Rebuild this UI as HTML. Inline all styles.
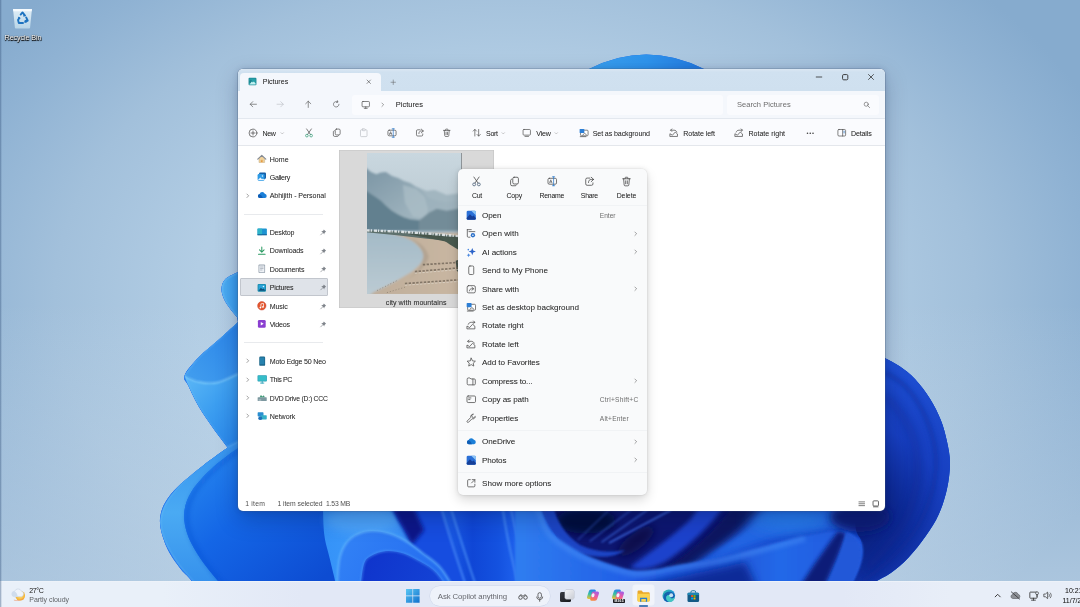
<!DOCTYPE html>
<html lang="en">
<head>
<meta charset="utf-8">
<title>Pictures - File Explorer</title>
<style>
*{box-sizing:border-box;margin:0;padding:0}
html,body{width:1080px;height:607px;overflow:hidden;background:#a9c6de}
body{position:relative;font-family:"Liberation Sans",sans-serif;font-size:7px;color:#1b1b1b;-webkit-font-smoothing:antialiased}
.abs{position:absolute}
#wall{position:absolute;left:0;top:0;width:1080px;height:607px}
.t{position:absolute;white-space:nowrap;line-height:10px;height:10px;margin-top:-4.4px;color:#303030;text-shadow:0 0 .3px rgba(0,0,0,.22)}
.g{color:#6d6d6d;text-shadow:none}
.ic{position:absolute;overflow:visible}
#win{position:absolute;left:238px;top:68.5px;width:646.5px;height:442px;border-radius:5px;background:#fff;overflow:hidden;box-shadow:0 0 0 .6px rgba(70,90,120,.45),0 8px 22px rgba(0,20,60,.26),0 0 6px rgba(0,20,60,.13)}
#tbar{position:absolute;left:0;top:0;width:100%;height:22px;background:linear-gradient(180deg,#dbe7f3 0,#d0e1f0 3px,#cfe0ef 100%)}
#tab{position:absolute;left:1.8px;top:4.600px;width:141.200px;height:17.900px;background:#f4f7fc;border-radius:4px 4px 0 0}
#nav{position:absolute;left:0;top:22px;width:100%;height:27.5px;background:#f4f7fc}
#addr{position:absolute;left:114px;top:26px;width:371px;height:20px;border-radius:3px;background:#fafbfe}
#tool{position:absolute;left:0;top:49.5px;width:100%;height:28px;background:#fafbfe;border-top:.6px solid #e3e8ef;border-bottom:.6px solid #e4e7ec}
#search{position:absolute;left:489px;top:26px;width:152px;height:20px;border-radius:3px;background:#fafbfe}
#side{position:absolute;left:0;top:78px;width:92px;height:350px}
.sel{position:absolute;background:#dfe3e9;border:.7px solid #c2c6cd;border-radius:1px}
.sep{position:absolute;left:6px;width:79px;height:.7px;background:#e8eaed}
#menu{position:absolute;left:458px;top:169px;width:188.5px;height:325.5px;border-radius:5px;background:#f9fafb;box-shadow:0 0 0 .5px rgba(0,0,0,.05),0 5px 12px rgba(0,0,0,.15),0 0 5px rgba(0,0,0,.09)}
.msep{position:absolute;left:0;width:100%;height:.7px;background:#f1f3f5}
#task{position:absolute;left:0;top:581px;width:1080px;height:26px;background:linear-gradient(90deg,#e9f0f9 0,#e9f0f9 15%,#e2e8f6 28%,#e2e8f6 78%,#e8eef8 88%,#e8eef8 100%);border-top:.7px solid #edf2f9}
#win .pg,#menu .pg,#task .pg,#recycle{filter:blur(.38px)}
</style>
</head>
<body>
<svg id="wall" viewBox="0 0 1080 607">
<defs>
<radialGradient id="bgx" gradientUnits="userSpaceOnUse" cx="515" cy="300" r="640" gradientTransform="translate(0,300) scale(1,.7) translate(0,-300)">
<stop offset="0" stop-color="#b9d2e7"/><stop offset=".5" stop-color="#b2cde4"/><stop offset=".72" stop-color="#a2c0db"/><stop offset=".9" stop-color="#8fb2d3"/><stop offset="1" stop-color="#86abce"/>
</radialGradient>
<linearGradient id="bgy" x1="0" x2="0" y1="0" y2="1">
<stop offset="0" stop-color="#dbe8f3" stop-opacity="0"/><stop offset=".5" stop-color="#dbe8f3" stop-opacity="0"/><stop offset="1" stop-color="#dde9f3" stop-opacity=".46"/>
</linearGradient>
<linearGradient id="shade" x1="0" x2="1" y1="0" y2="0"><stop offset="0" stop-color="#1a72ee"/><stop offset=".25" stop-color="#145ae2"/><stop offset=".6" stop-color="#1448d0"/><stop offset="1" stop-color="#123cba"/></linearGradient>
<linearGradient id="p1" x1="0" x2="1" y1="0" y2="0"><stop offset="0" stop-color="#50b0f4"/><stop offset="1" stop-color="#3498ec"/></linearGradient>
<linearGradient id="p2" gradientUnits="userSpaceOnUse" x1="185" y1="380" x2="245" y2="430"><stop offset="0" stop-color="#5ab6f6"/><stop offset=".5" stop-color="#3c9ef0"/><stop offset="1" stop-color="#2886ea"/></linearGradient>
<linearGradient id="p2in" gradientUnits="userSpaceOnUse" x1="190" y1="375" x2="240" y2="330"><stop offset="0" stop-color="#409cee"/><stop offset="1" stop-color="#2a84e8"/></linearGradient>
<linearGradient id="p3" gradientUnits="userSpaceOnUse" x1="0" y1="440" x2="0" y2="585"><stop offset="0" stop-color="#3592ee"/><stop offset=".5" stop-color="#4aaaf3"/><stop offset="1" stop-color="#3590ec"/></linearGradient>
<linearGradient id="p3in" gradientUnits="userSpaceOnUse" x1="190" y1="450" x2="310" y2="590"><stop offset="0" stop-color="#288af0"/><stop offset=".45" stop-color="#1466e6"/><stop offset="1" stop-color="#0d4cd2"/></linearGradient>
<linearGradient id="lp" gradientUnits="userSpaceOnUse" x1="322" y1="0" x2="450" y2="0"><stop offset="0" stop-color="#3492f8"/><stop offset=".45" stop-color="#419cfb"/><stop offset="1" stop-color="#2a78f0"/></linearGradient>
<linearGradient id="arch" gradientUnits="userSpaceOnUse" x1="345" y1="530" x2="450" y2="590"><stop offset="0" stop-color="#3282f6"/><stop offset="1" stop-color="#2268ee"/></linearGradient>
<linearGradient id="archin" gradientUnits="userSpaceOnUse" x1="365" y1="555" x2="445" y2="590"><stop offset="0" stop-color="#0f34cc"/><stop offset="1" stop-color="#1444d6"/></linearGradient>
<linearGradient id="sw" gradientUnits="userSpaceOnUse" x1="520" y1="0" x2="805" y2="0"><stop offset="0" stop-color="#3a86f4"/><stop offset=".4" stop-color="#2a66ea"/><stop offset="1" stop-color="#3a7cf0"/></linearGradient>
<linearGradient id="curl" gradientUnits="userSpaceOnUse" x1="740" y1="0" x2="865" y2="0"><stop offset="0" stop-color="#2268ea"/><stop offset=".6" stop-color="#1d56dc"/><stop offset="1" stop-color="#2a64dc"/></linearGradient>
<radialGradient id="rp" gradientUnits="userSpaceOnUse" cx="852" cy="520" r="175"><stop offset="0" stop-color="#081a72"/><stop offset=".28" stop-color="#0d2a96"/><stop offset=".55" stop-color="#173fc0"/><stop offset="1" stop-color="#1f52d6"/></radialGradient>
<linearGradient id="big" gradientUnits="userSpaceOnUse" x1="520" y1="0" x2="865" y2="0"><stop offset="0" stop-color="#2f7cf0"/><stop offset=".3" stop-color="#2260e6"/><stop offset=".55" stop-color="#1c4ed0"/><stop offset=".75" stop-color="#2468e8"/><stop offset="1" stop-color="#2058dc"/></linearGradient>
<linearGradient id="folds" gradientUnits="userSpaceOnUse" x1="440" y1="0" x2="570" y2="0"><stop offset="0" stop-color="#1e60e8"/><stop offset=".25" stop-color="#0f46d6"/><stop offset=".45" stop-color="#1452e0"/><stop offset=".6" stop-color="#1f62ee"/><stop offset="1" stop-color="#2468f0"/></linearGradient>
<linearGradient id="toparc" x1="0" x2="1" y1="0" y2="0"><stop offset="0" stop-color="#3aa0ee"/><stop offset=".5" stop-color="#2e94ec"/><stop offset="1" stop-color="#2278de"/></linearGradient>
<filter id="b2" x="-20%" y="-20%" width="140%" height="140%"><feGaussianBlur stdDeviation="2"/></filter>
<filter id="b4" x="-30%" y="-30%" width="160%" height="160%"><feGaussianBlur stdDeviation="4"/></filter>
<filter id="b8" x="-40%" y="-40%" width="180%" height="180%"><feGaussianBlur stdDeviation="8"/></filter>
<filter id="b1" x="-20%" y="-20%" width="140%" height="140%"><feGaussianBlur stdDeviation="1"/></filter>

<clipPath id="sil"><path d="M589,69 Q646,40 704,69 L885,200 L885,357.9 C887.5,359.3 895.0,363.0 900.0,366.5 C905.0,370.0 910.0,373.6 915.0,379.0 C920.0,384.4 925.7,391.9 930.0,398.7 C934.3,405.5 938.0,412.9 940.8,420.0 C943.6,427.1 945.5,434.4 947.0,441.6 C948.5,448.8 950.0,455.1 950.0,463.0 C950.0,470.9 948.9,480.4 947.0,489.0 C945.1,497.6 942.2,506.7 938.7,514.5 C935.2,522.3 930.8,528.8 925.8,536.0 C920.8,543.2 914.3,551.4 908.6,557.5 C902.9,563.6 896.5,568.8 891.5,572.5 C886.5,576.2 883.9,576.8 878.6,580.0 C873.4,583.2 863.1,590.0 860.0,592.0 L200,607 C198.7,602.8 195.2,588.3 192.0,582.0 C188.8,575.7 184.9,574.8 180.7,569.0 C176.5,563.2 170.0,555.3 166.6,547.0 C163.2,538.7 159.3,527.8 160.0,519.0 C160.7,510.2 163.9,502.8 171.0,494.0 C178.1,485.2 191.6,474.8 202.6,466.0 C213.6,457.2 231.3,445.2 237.0,441.0 L228,448 C225.5,444.7 217.8,434.8 213.0,428.0 C208.2,421.2 203.1,414.0 199.0,407.0 C194.9,400.0 190.9,391.3 188.5,386.0 C186.1,380.7 182.8,380.2 184.6,375.4 C186.3,370.6 193.1,363.1 199.0,357.0 C204.9,350.9 213.5,344.3 220.0,338.5 C226.5,332.7 235.0,324.8 238.0,322.0 L237.3,317.4 C236.2,316.1 232.9,312.6 230.7,309.5 C228.5,306.4 225.5,302.5 224.0,299.0 C222.5,295.5 221.3,291.8 221.5,288.5 C221.7,285.2 222.7,281.8 225.4,279.0 C228.2,276.2 235.9,273.2 238.0,272.0 L400,200 Z"/></clipPath>
</defs>
<rect width="1080" height="607" fill="url(#bgx)"/>
<rect width="1080" height="607" fill="url(#bgy)"/>
<g clip-path="url(#sil)">
<rect width="1080" height="607" fill="#1560e6"/>
<rect x="150" y="250" width="850" height="360" fill="url(#shade)"/>
<path d="M240,268 L238,272  C235.9,273.2 228.2,276.2 225.4,279.0 C222.7,281.8 221.7,285.2 221.5,288.5 C221.3,291.8 222.5,295.5 224.0,299.0 C225.5,302.5 228.5,306.4 230.7,309.5 C232.9,312.6 235.8,315.6 237.3,317.4 C238.9,319.1 239.6,319.6 240.0,320.0 L240,320 Z" fill="url(#p1)"/>
<path d="M240.0,320.0 C236.7,323.1 226.8,332.3 220.0,338.5 C213.2,344.7 204.9,350.9 199.0,357.0 C193.1,363.1 187.0,372.3 184.6,375.4  C185.2,377.2 186.1,380.7 188.5,386.0 C190.9,391.3 194.9,400.0 199.0,407.0 C203.1,414.0 208.2,421.2 213.0,428.0 C217.8,434.8 223.5,442.7 228.0,448.0 C232.5,453.3 238.0,458.0 240.0,460.0 L240,320Z" fill="url(#p2)"/>
<path d="M240.0,320.0 C236.7,323.1 226.8,332.3 220.0,338.5 C213.2,344.7 204.9,350.9 199.0,357.0 C193.1,363.1 187.0,372.3 184.6,375.4  C187.0,377.4 193.5,381.0 199.0,382.0 C204.5,383.0 210.7,384.0 217.5,382.5 C224.3,381.0 236.2,374.6 240.0,373.0 L240,320Z" fill="url(#p2in)"/>
<path d="M184.6,376.5 C187.0,377.4 193.5,381.0 199.0,382.0 C204.5,383.0 210.7,384.0 217.5,382.5 C224.3,381.0 236.2,374.6 240.0,373.0" fill="none" stroke="#8ad2fc" stroke-width="1.300" opacity=".9" filter="url(#b1)"/>
<path d="M238.0,272.0 C235.9,273.2 228.2,276.2 225.4,279.0 C222.7,281.8 221.7,285.2 221.5,288.5 C221.3,291.8 222.5,295.5 224.0,299.0 C225.5,302.5 228.5,306.4 230.7,309.5 C232.9,312.6 236.2,316.1 237.3,317.4" fill="none" stroke="#86cefb" stroke-width="1.100" opacity=".85" filter="url(#b1)"/>
<path d="M240.0,320.0 C236.7,323.1 226.8,332.3 220.0,338.5 C213.2,344.7 204.9,350.9 199.0,357.0 C193.1,363.1 187.0,372.3 184.6,375.4" fill="none" stroke="#7cc8fa" stroke-width="1" opacity=".7" filter="url(#b1)"/>
<path d="M184.6,375.4 C185.2,377.2 186.1,380.7 188.5,386.0 C190.9,391.3 194.9,400.0 199.0,407.0 C203.1,414.0 208.2,421.2 213.0,428.0 C217.8,434.8 225.5,444.7 228.0,448.0" fill="none" stroke="#7cc8fa" stroke-width="1" opacity=".6" filter="url(#b1)"/>
<path d="M240.0,440.5 C236.0,442.7 224.4,448.0 216.0,453.7 C207.6,459.4 197.5,467.4 189.6,474.9 C181.7,482.4 173.4,491.1 168.5,498.6 C163.6,506.1 161.0,512.7 160.3,519.7 C159.6,526.7 161.8,533.8 164.5,540.8 C167.2,547.8 172.2,555.7 176.4,561.9 C180.6,568.1 185.7,573.1 189.6,577.8 C193.5,582.5 198.3,588.0 200.0,590.0 L226,590  C223.8,587.5 217.8,581.0 213.0,575.0 C208.2,569.0 201.8,561.0 197.5,554.0 C193.2,547.0 189.2,540.0 187.0,533.0 C184.8,526.0 183.5,518.9 184.3,511.8 C185.1,504.8 187.2,498.2 192.0,490.7 C196.8,483.2 205.0,474.6 213.3,467.0 C221.6,459.4 237.2,448.7 242.0,445.0 Z" fill="url(#p3)"/>
<path d="M242.0,445.0 C237.2,448.7 221.6,459.4 213.3,467.0 C205.0,474.6 196.8,483.2 192.0,490.7 C187.2,498.2 185.1,504.8 184.3,511.8 C183.5,518.9 184.8,526.0 187.0,533.0 C189.2,540.0 193.2,547.0 197.5,554.0 C201.8,561.0 208.2,569.0 213.0,575.0 C217.8,581.0 223.8,587.5 226.0,590.0 L352,590 L352,505 L242,505 Z" fill="url(#p3in)"/>
<path d="M242.0,445.0 C237.2,448.7 221.6,459.4 213.3,467.0 C205.0,474.6 196.8,483.2 192.0,490.7 C187.2,498.2 185.1,504.8 184.3,511.8 C183.5,518.9 184.8,526.0 187.0,533.0 C189.2,540.0 193.2,547.0 197.5,554.0 C201.8,561.0 208.2,569.0 213.0,575.0 C217.8,581.0 223.8,587.5 226.0,590.0" fill="none" stroke="#0b4fd0" stroke-width="3" opacity=".55" filter="url(#b2)" transform="translate(3,1)"/>
<path d="M240.0,440.5 C236.0,442.7 224.4,448.0 216.0,453.7 C207.6,459.4 197.5,467.4 189.6,474.9 C181.7,482.4 173.4,491.1 168.5,498.6 C163.6,506.1 161.0,512.7 160.3,519.7 C159.6,526.7 161.8,533.8 164.5,540.8 C167.2,547.8 172.2,555.7 176.4,561.9 C180.6,568.1 185.7,573.1 189.6,577.8 C193.5,582.5 198.3,588.0 200.0,590.0" fill="none" stroke="#84ccfb" stroke-width="1" opacity=".7" filter="url(#b1)"/>
<path d="M323.0,508.0 C323.2,512.6 323.3,527.3 324.4,535.6 C325.5,543.9 327.3,548.5 329.6,557.9 C331.9,567.3 336.6,586.3 338.0,592.0 L470,592 L440,508 Z" fill="url(#lp)"/>
<ellipse cx="362" cy="520" rx="36" ry="13" fill="#4fa6fb" opacity=".8" filter="url(#b4)"/>
<path d="M392,508 L398,520 L404,530 L412,545 L440,592 L475,592 L446,508 Z" fill="#154ee0" filter="url(#b1)"/>
<path d="M392,508 L414,508 L424,530 L412,545 L404,530 Z" fill="#0a1688" filter="url(#b2)"/>
<path d="M337.0,592.0 C337.3,587.0 337.8,569.7 339.0,562.0 C340.2,554.3 341.8,550.4 344.4,546.0 C347.0,541.6 350.6,538.1 354.8,535.6 C359.0,533.1 363.9,531.4 369.6,531.0 C375.3,530.6 382.7,531.6 388.9,533.4 C395.1,535.2 401.0,538.3 406.7,541.6 C412.4,544.9 417.3,549.0 423.0,553.4 C428.7,557.8 435.2,561.6 440.7,568.0 C446.2,574.4 453.4,588.0 456.0,592.0 Z" fill="url(#arch)"/>
<path d="M337.0,592.0 C337.3,587.0 337.8,569.7 339.0,562.0 C340.2,554.3 341.8,550.4 344.4,546.0 C347.0,541.6 350.6,538.1 354.8,535.6 C359.0,533.1 363.9,531.4 369.6,531.0 C375.3,530.6 382.7,531.6 388.9,533.4 C395.1,535.2 401.0,538.3 406.7,541.6 C412.4,544.9 417.3,549.0 423.0,553.4 C428.7,557.8 435.2,561.6 440.7,568.0 C446.2,574.4 453.4,588.0 456.0,592.0" fill="none" stroke="#62b4fc" stroke-width="1.800" opacity=".85" filter="url(#b1)"/>
<path d="M360.0,592.0 C360.6,587.5 361.9,571.0 363.7,565.0 C365.5,559.0 367.3,558.3 371.0,556.0 C374.7,553.7 380.6,551.4 386.0,551.0 C391.4,550.6 397.8,551.5 403.7,553.4 C409.6,555.3 416.1,559.1 421.5,562.3 C426.9,565.5 431.6,567.8 436.3,572.7 C441.1,577.7 447.7,588.8 450.0,592.0 Z" fill="url(#archin)"/>
<path d="M360.0,592.0 C360.6,587.5 361.9,571.0 363.7,565.0 C365.5,559.0 367.3,558.3 371.0,556.0 C374.7,553.7 380.6,551.4 386.0,551.0 C391.4,550.6 397.8,551.5 403.7,553.4 C409.6,555.3 416.1,559.1 421.5,562.3 C426.9,565.5 431.6,567.8 436.3,572.7 C441.1,577.7 447.7,588.8 450.0,592.0" fill="none" stroke="#4f9df8" stroke-width="1.300" opacity=".75" filter="url(#b1)"/>
<path d="M440,505 L545,505 C552,540 575,570 600,592 L470,592 Z" fill="url(#folds)"/>
<path d="M441,508 Q452,545 468,592" fill="none" stroke="#4c92f7" stroke-width="2" opacity=".75" filter="url(#b1)"/>
<path d="M450.700,508 Q462,545 478,592" fill="none" stroke="#4c92f7" stroke-width="2" opacity=".75" filter="url(#b1)"/>
<path d="M502.600,508 Q508,545 520,592" fill="none" stroke="#4c92f7" stroke-width="2" opacity=".75" filter="url(#b1)"/>
<path d="M510.700,508 Q518,545 534,592" fill="none" stroke="#4c92f7" stroke-width="2" opacity=".75" filter="url(#b1)"/>
<path d="M523,508 Q535,550 562,592" fill="none" stroke="#4c92f7" stroke-width="2" opacity=".75" filter="url(#b1)"/>
<path d="M540,505 L800,505 C750,530 700,560 655,578 C610,574 560,552 540,505Z" fill="#0b1870" filter="url(#b2)"/>
<ellipse cx="586" cy="521" rx="30" ry="13" fill="#04083a" filter="url(#b4)"/>
<ellipse cx="636" cy="541" rx="22" ry="8" fill="#070d4c" filter="url(#b4)" transform="rotate(-38 636 541)"/>
<path d="M553,505 C556,520 565,535 580,545 C595,552 612,553 625,550 C612,560 590,558 572,550 C555,540 545,522 541,505Z" fill="#1c44c4" filter="url(#b1)"/>
<path d="M577.8,540 L609,510" stroke="#3a66dc" stroke-width="1.800" opacity="0.35" filter="url(#b1)"/>
<path d="M589.6,541.5 L631,510" stroke="#3a66dc" stroke-width="1.800" opacity="0.5" filter="url(#b1)"/>
<path d="M601.5,542.3 L647.4,510" stroke="#3a66dc" stroke-width="1.800" opacity="0.65" filter="url(#b1)"/>
<path d="M609,543 L671,510" stroke="#3a66dc" stroke-width="1.800" opacity="0.95" filter="url(#b1)"/>
<path d="M630,567 C645,556 670,538 690,520 L700,506 L724,506 C712,524 690,545 668,560 C655,568 640,572 630,567Z" fill="#1d42cc" filter="url(#b2)"/>
<path d="M657,574 C680,560 705,540 722,520 L734,506 L762,506 C745,528 720,548 698,562 C682,572 668,576 657,574Z" fill="#0a1460" filter="url(#b2)" opacity=".95"/>
<path d="M765,505 L860,505 L850,530 C820,527 790,533 760,543 C740,550 715,560 690,566 C725,545 750,525 765,505Z" fill="#2266e4" filter="url(#b4)"/>
<ellipse cx="790" cy="520" rx="40" ry="11" fill="#2a86f0" opacity=".7" filter="url(#b8)"/>
<path d="M870,352  C872.5,353.0 880.0,355.5 885.0,357.9 C890.0,360.3 895.0,363.0 900.0,366.5 C905.0,370.0 910.0,373.6 915.0,379.0 C920.0,384.4 925.7,391.9 930.0,398.7 C934.3,405.5 938.0,412.9 940.8,420.0 C943.6,427.1 945.5,434.4 947.0,441.6 C948.5,448.8 950.0,455.1 950.0,463.0 C950.0,470.9 948.9,480.4 947.0,489.0 C945.1,497.6 942.2,506.7 938.7,514.5 C935.2,522.3 930.8,528.8 925.8,536.0 C920.8,543.2 914.3,551.4 908.6,557.5 C902.9,563.6 896.5,568.8 891.5,572.5 C886.5,576.2 883.9,576.8 878.6,580.0 C873.4,583.2 863.1,590.0 860.0,592.0 L848,592 C858,570 866,552 860,538 C852,528 856,515 860,505 L885,505Z" fill="url(#rp)"/>
<path d="M885.0,372.0 C888.3,374.3 899.0,380.0 905.0,386.0 C911.0,392.0 916.5,399.8 921.0,408.0 C925.5,416.2 929.5,426.0 932.0,435.0 C934.5,444.0 936.0,452.5 936.0,462.0 C936.0,471.5 934.7,482.0 932.0,492.0 C929.3,502.0 924.8,513.0 920.0,522.0 C915.2,531.0 908.8,539.0 903.0,546.0 C897.2,553.0 891.8,558.0 885.0,564.0 C878.2,570.0 865.8,579.0 862.0,582.0" fill="none" stroke="#0c2a96" stroke-width="4" opacity=".5" filter="url(#b2)"/>
<path d="M885.0,395.0 C888.3,399.2 899.8,410.8 905.0,420.0 C910.2,429.2 914.2,439.2 916.0,450.0 C917.8,460.8 917.8,473.3 916.0,485.0 C914.2,496.7 910.2,509.5 905.0,520.0 C899.8,530.5 891.5,539.7 885.0,548.0 C878.5,556.3 869.2,566.3 866.0,570.0" fill="none" stroke="#0a2386" stroke-width="8" opacity=".35" filter="url(#b4)"/>
<ellipse cx="860" cy="517" rx="30" ry="15" fill="#0a1c76" filter="url(#b4)"/>
<path d="M536.0,500.0 C536.6,501.3 537.6,503.3 539.6,508.0 C541.6,512.7 544.6,522.7 548.0,528.0 C551.4,533.3 553.8,535.5 560.0,540.0 C566.2,544.5 576.3,550.8 585.0,555.0 C593.7,559.2 603.8,562.4 612.0,565.0 C620.2,567.6 626.8,569.8 634.0,570.5 C641.2,571.2 647.6,570.4 655.0,569.5 C662.4,568.6 667.7,566.9 678.5,565.0 C689.3,563.1 709.8,560.0 720.0,558.0 C730.2,556.0 731.7,555.2 740.0,553.0 C748.3,550.8 758.9,547.9 770.0,545.0 C781.1,542.1 795.0,537.8 806.7,535.5 C818.4,533.2 831.5,530.6 840.0,531.0 C848.5,531.4 854.0,534.8 857.8,537.8 C861.6,540.8 862.6,544.2 863.0,549.0 C863.4,553.8 862.5,559.5 860.0,566.7 C857.5,573.9 850.0,587.8 848.0,592.0 L515,592 L515,505 Z" fill="url(#big)" filter="url(#b1)"/>
<path d="M612,594 C640,584 690,576 745,562 C752,575 756,585 758,594Z" fill="#0f2c98" filter="url(#b4)"/>
<path d="M536.0,500.0 C536.6,501.3 537.6,503.3 539.6,508.0 C541.6,512.7 544.6,522.7 548.0,528.0 C551.4,533.3 553.8,535.5 560.0,540.0 C566.2,544.5 576.3,550.8 585.0,555.0 C593.7,559.2 603.8,562.4 612.0,565.0 C620.2,567.6 626.8,569.8 634.0,570.5 C641.2,571.2 647.6,570.4 655.0,569.5 C662.4,568.6 667.7,566.9 678.5,565.0 C689.3,563.1 709.8,560.0 720.0,558.0 C730.2,556.0 731.7,555.2 740.0,553.0 C748.3,550.8 759.0,547.9 770.0,545.0 C781.0,542.1 800.0,537.1 806.0,535.5" fill="none" stroke="#4a90f6" stroke-width="5" opacity=".55" filter="url(#b2)" transform="translate(-1,3)"/>
<path d="M838,531 C826,548 812,566 797,592 L822,592 C832,570 842,548 846,533Z" fill="#0a1a78" filter="url(#b2)"/>
<path d="M846,533 C856,536 862,545 861,556 C859,570 852,582 848,592 L824,592 C834,570 842,550 846,533Z" fill="#2458d8" filter="url(#b1)"/>
</g>
<path d="M589,69 Q646,40 704,69Z" fill="url(#toparc)"/>
</svg>
<div id="recycle" class="abs" style="left:0;top:0;width:46px;height:46px">
<svg class="ic" viewBox="0 0 40 40" style="left:11.500px;top:7.500px;width:21px;height:21px">
<defs><linearGradient id="rb" x1="0" y1="0" x2="0" y2="1"><stop offset="0" stop-color="#e9f4fb"/><stop offset="1" stop-color="#bcd8ea"/></linearGradient></defs>
<path d="M2,2H38L34.500,37A2,2 0 0 1 32.500,39H7.500A2,2 0 0 1 5.500,37Z" fill="url(#rb)" opacity=".92"/>
<path d="M2,2H38L37.600,6H2.400Z" fill="#f6fbfe"/>
<g fill="none" stroke="#1e73c0" stroke-width="3.600" stroke-linecap="round" stroke-linejoin="round">
<path d="M16.500,12.500L20,8.500L24.500,14"/><path d="M27,18L30,24L25,26.500"/><path d="M21,28.500H13L11.500,23L14,19"/>
</g>
<path d="M22,11L27,15L21.500,16.500Z M29.500,21L27.500,28L23.500,24Z M11,22L12,16L16.500,20Z" fill="#1e73c0"/>
</svg>
<span class="abs" style="left:0;top:33px;width:46px;height:10px;line-height:10px;text-align:center;font-size:7.200px;color:#fff;letter-spacing:-.1px;text-shadow:0 .6px 1.200px rgba(0,0,0,.95),0 0 1px rgba(0,0,0,.9),.5px .5px .5px rgba(0,0,0,.8)">Recycle Bin</span>
</div>
<div class="abs" style="left:0;top:0;width:1.500px;height:607px;z-index:5;background:linear-gradient(90deg,rgba(60,90,130,.55),rgba(60,90,130,0))"></div>
<div id="win">
<div id="tbar"></div><div id="tab"></div><div id="nav"></div><div id="addr"></div><div id="search"></div><div id="tool"></div>
<div class="pg" style="position:absolute;left:-238px;top:-68.500px;width:1080px;height:607px">
<svg class="ic" viewBox="0 0 16 16" style="left:247.90px;top:77.10px;width:9.00px;height:9.00px"><rect x="1" y="1.500" width="14" height="13" rx="1.800" fill="#1d8794"/><rect x="2.300" y="2.800" width="11.400" height="10.400" rx=".8" fill="#27a0a8"/><path d="M2.300,13.200L6.500,7.500L8.500,9.800L10.500,8L13.700,12.200V13.200Z" fill="#c4f2f2"/><path d="M2.300,8L5,4.500L7.500,7.500L6.500,8.500L3.500,12Z" fill="#167480" opacity=".7"/></svg>
<span class="t" style="left:262.70px;top:81.30px;font-size:7.10px;letter-spacing:-0.019px">Pictures</span>
<svg class="ic" viewBox="0 0 16 16" style="left:365.75px;top:78.95px;width:5.50px;height:5.50px"><path d="M3,3L13,13M13,3L3,13" fill="none" stroke="#2c2c2c" stroke-width="1.500" stroke-linecap="round"/></svg>
<svg class="ic" viewBox="0 0 16 16" style="left:390.35px;top:78.75px;width:6.50px;height:6.50px"><path d="M8,2.5V13.5M2.5,8H13.5" fill="none" stroke="#555" stroke-width="1.2" stroke-linecap="round"/></svg>
<svg class="ic" viewBox="0 0 16 16" style="left:815.00px;top:73.20px;width:8.00px;height:8.00px"><path d="M2.500,8H13.500" fill="none" stroke="#2c2c2c" stroke-width="1.600" stroke-linecap="round"/></svg>
<svg class="ic" viewBox="0 0 16 16" style="left:840.60px;top:72.90px;width:8.40px;height:8.40px"><rect x="3" y="3" width="10" height="10" rx="2.200" fill="none" stroke="#2c2c2c" stroke-width="1.700"/></svg>
<svg class="ic" viewBox="0 0 16 16" style="left:867.00px;top:73.10px;width:8.00px;height:8.00px"><path d="M3,3L13,13M13,3L3,13" fill="none" stroke="#2c2c2c" stroke-width="1.500" stroke-linecap="round"/></svg>
<svg class="ic" viewBox="0 0 16 16" style="left:248.85px;top:100.15px;width:8.50px;height:8.50px"><path d="M14,8H2.5M7,3.2L2.3,8L7,12.8" fill="none" stroke="#4a4a4a" stroke-width="1.15" stroke-linecap="round" stroke-linejoin="round"/></svg>
<svg class="ic" viewBox="0 0 16 16" style="left:276.15px;top:100.15px;width:8.50px;height:8.50px"><path d="M2,8H13.5M9,3.2L13.7,8L9,12.8" fill="none" stroke="#b9bcc2" stroke-width="1.15" stroke-linecap="round" stroke-linejoin="round"/></svg>
<svg class="ic" viewBox="0 0 16 16" style="left:303.85px;top:100.15px;width:8.50px;height:8.50px"><path d="M8,14V2.5M3.2,7L8,2.3L12.8,7" fill="none" stroke="#4a4a4a" stroke-width="1.15" stroke-linecap="round" stroke-linejoin="round"/></svg>
<svg class="ic" viewBox="0 0 16 16" style="left:332.25px;top:100.15px;width:8.50px;height:8.50px"><path d="M13.2,8A5.2,5.2 0 1 1 10.8,3.6" fill="none" stroke="#4a4a4a" stroke-width="1.15" stroke-linecap="round" stroke-linejoin="round"/><path d="M10.2,1.2L11.2,3.9L8.4,4.6" fill="none" stroke="#4a4a4a" stroke-width="1.15" stroke-linecap="round" stroke-linejoin="round"/></svg>
<svg class="ic" viewBox="0 0 16 16" style="left:360.95px;top:99.65px;width:9.50px;height:9.50px"><rect x="1.8" y="2.5" width="12.4" height="9" rx="1.5" fill="none" stroke="#4a4a4a" stroke-width="1.15" stroke-linecap="round" stroke-linejoin="round"/><path d="M5.5,14H10.5M8,11.5V14" fill="none" stroke="#4a4a4a" stroke-width="1.15" stroke-linecap="round" stroke-linejoin="round"/></svg>
<svg class="ic" viewBox="0 0 16 16" style="left:380.05px;top:101.85px;width:5.50px;height:5.50px"><path d="M5.5,3L10.5,8L5.5,13" fill="none" stroke="#4c4c4c" stroke-width="1.500" stroke-linecap="round" stroke-linejoin="round"/></svg>
<span class="t" style="left:395.70px;top:104.60px;font-size:7.50px;letter-spacing:0.038px">Pictures</span>
<span class="t g" style="left:736.90px;top:104.60px;font-size:7.50px;letter-spacing:0.057px">Search Pictures</span>
<svg class="ic" viewBox="0 0 16 16" style="left:863.20px;top:101.00px;width:7.60px;height:7.60px"><circle cx="6.8" cy="6.8" r="4.3" fill="none" stroke="#4a4a4a" stroke-width="1.15" stroke-linecap="round" stroke-linejoin="round"/><path d="M10,10L14,14" fill="none" stroke="#4a4a4a" stroke-width="1.15" stroke-linecap="round" stroke-linejoin="round"/></svg>
<svg class="ic" viewBox="0 0 16 16" style="left:247.60px;top:128.10px;width:10.00px;height:10.00px"><circle cx="8" cy="8" r="6.3" fill="none" stroke="#4a4a4a" stroke-width="1.15" stroke-linecap="round" stroke-linejoin="round"/><path d="M8,4.8V11.2M4.8,8H11.2" fill="none" stroke="#4a4a4a" stroke-width="1.15" stroke-linecap="round" stroke-linejoin="round"/></svg>
<span class="t" style="left:262.40px;top:133.10px;font-size:7.10px;letter-spacing:-0.301px">New</span>
<svg class="ic" viewBox="0 0 16 16" style="left:279.75px;top:131.15px;width:4.50px;height:4.50px"><path d="M3.5,6L8,10.5L12.5,6" fill="none" stroke="#7a7a7a" stroke-width="1.4" stroke-linecap="round" stroke-linejoin="round"/></svg>
<svg class="ic" viewBox="0 0 16 16" style="left:303.70px;top:128.10px;width:10.00px;height:10.00px"><path d="M4.2,1.5L10.2,10.2M11.8,1.5L5.8,10.2" fill="none" stroke="#4a4a4a" stroke-width="1.15" stroke-linecap="round"/><circle cx="4.6" cy="12.2" r="2.1" fill="none" stroke="#2f9a72" stroke-width="1.15"/><circle cx="11.4" cy="12.2" r="2.1" fill="none" stroke="#2f9a72" stroke-width="1.15"/></svg>
<svg class="ic" viewBox="0 0 16 16" style="left:331.75px;top:128.35px;width:9.50px;height:9.50px"><rect x="5.5" y="1.8" width="8.2" height="9.8" rx="2" fill="none" stroke="#4a4a4a" stroke-width="1.15" stroke-linecap="round" stroke-linejoin="round"/><path d="M4,4.6C2.9,4.8 2.3,5.5 2.3,6.6V12A2.2,2.2 0 0 0 4.5,14.2H9C10,14.2 10.6,13.7 10.9,12.9" fill="none" stroke="#4a4a4a" stroke-width="1.15" stroke-linecap="round" stroke-linejoin="round"/></svg>
<svg class="ic" viewBox="0 0 16 16" style="left:358.95px;top:128.35px;width:9.50px;height:9.50px"><path d="M5.5,3H4A1.5,1.5 0 0 0 2.5,4.5V13A1.5,1.5 0 0 0 4,14.5H12A1.5,1.5 0 0 0 13.500,13V4.500A1.500,1.500 0 0 0 12,3H10.500" fill="none" stroke="#b9bcc2" stroke-width="1.15" stroke-linecap="round" stroke-linejoin="round"/><rect x="5.500" y="1.500" width="5" height="3" rx="1" fill="none" stroke="#b9bcc2" stroke-width="1.15" stroke-linecap="round" stroke-linejoin="round"/></svg>
<svg class="ic" viewBox="0 0 16 16" style="left:386.70px;top:128.10px;width:10.00px;height:10.00px"><rect x="1.500" y="3.500" width="13" height="9" rx="2" fill="none" stroke="#4a4a4a" stroke-width="1.15" stroke-linecap="round" stroke-linejoin="round"/><path d="M10,1.200V14.800M8.300,1.200H11.700M8.300,14.800H11.700" fill="none" stroke="#2a78c8" stroke-width="1.1" stroke-linecap="round"/><path d="M4,10.500L5.800,5.800L7.600,10.500M4.600,9H7" fill="none" stroke="#4a4a4a" stroke-width=".9" stroke-linecap="round" stroke-linejoin="round"/></svg>
<svg class="ic" viewBox="0 0 16 16" style="left:414.55px;top:128.35px;width:9.50px;height:9.50px"><path d="M8.500,3H4.500A2,2 0 0 0 2.500,5V11.500A2,2 0 0 0 4.500,13.500H11A2,2 0 0 0 13,11.500V10" fill="none" stroke="#4a4a4a" stroke-width="1.15" stroke-linecap="round" stroke-linejoin="round"/><path d="M10.500,1.800L14,5L10.500,8.200M14,5H10.500C8,5 6.500,6.700 6.500,9.500" fill="none" stroke="#4a4a4a" stroke-width="1.15" stroke-linecap="round" stroke-linejoin="round"/></svg>
<svg class="ic" viewBox="0 0 16 16" style="left:442.35px;top:128.35px;width:9.50px;height:9.50px"><path d="M2.500,4H13.500M6,4V2.800A1,1 0 0 1 7,1.800H9A1,1 0 0 1 10,2.800V4M3.800,4L4.600,13A1.500,1.500 0 0 0 6.100,14.300H9.900A1.500,1.500 0 0 0 11.400,13L12.200,4M6.800,7V11.300M9.200,7V11.300" fill="none" stroke="#4a4a4a" stroke-width="1.15" stroke-linecap="round" stroke-linejoin="round"/></svg>
<svg class="ic" viewBox="0 0 16 16" style="left:471.55px;top:128.35px;width:9.50px;height:9.50px"><path d="M4.800,13.500V2.500M2,5.200L4.800,2.400L7.600,5.200M11.200,2.500V13.500M8.400,10.800L11.200,13.600L14,10.800" fill="none" stroke="#4a4a4a" stroke-width="1.15" stroke-linecap="round" stroke-linejoin="round"/></svg>
<span class="t" style="left:486.00px;top:133.10px;font-size:7.10px;letter-spacing:-0.330px">Sort</span>
<svg class="ic" viewBox="0 0 16 16" style="left:500.95px;top:131.15px;width:4.50px;height:4.50px"><path d="M3.5,6L8,10.5L12.5,6" fill="none" stroke="#7a7a7a" stroke-width="1.4" stroke-linecap="round" stroke-linejoin="round"/></svg>
<svg class="ic" viewBox="0 0 16 16" style="left:522.05px;top:128.35px;width:9.50px;height:9.50px"><rect x="1.800" y="2.500" width="12.400" height="9.500" rx="1.500" fill="none" stroke="#4a4a4a" stroke-width="1.15" stroke-linecap="round" stroke-linejoin="round"/><path d="M5,14.200H11" fill="none" stroke="#4a4a4a" stroke-width="1.15" stroke-linecap="round" stroke-linejoin="round"/></svg>
<span class="t" style="left:536.30px;top:133.10px;font-size:7.10px;letter-spacing:-0.215px">View</span>
<svg class="ic" viewBox="0 0 16 16" style="left:554.05px;top:131.15px;width:4.50px;height:4.50px"><path d="M3.5,6L8,10.5L12.5,6" fill="none" stroke="#7a7a7a" stroke-width="1.4" stroke-linecap="round" stroke-linejoin="round"/></svg>
<svg class="ic" viewBox="0 0 16 16" style="left:578.50px;top:128.10px;width:10.00px;height:10.00px"><rect x="2.500" y="3.500" width="12" height="9" rx="1.500" fill="#fff" stroke="#4a4a4a" stroke-width="1.100"/><rect x="1" y="1.500" width="7.500" height="6.500" rx="1" fill="#2d7fd6"/><path d="M2,13.800H11" fill="none" stroke="#4a4a4a" stroke-width="1.15" stroke-linecap="round" stroke-linejoin="round"/><path d="M6,11L9,8.500L12,11" fill="none" stroke="#4a4a4a" stroke-width="1.15" stroke-linecap="round" stroke-linejoin="round"/></svg>
<span class="t" style="left:592.70px;top:133.10px;font-size:7.10px;letter-spacing:-0.112px">Set as background</span>
<svg class="ic" viewBox="0 0 16 16" style="left:668.70px;top:128.10px;width:10.00px;height:10.00px"><path d="M2,13.500H13.500V9.500L10,6.500L5.500,11.500L2,9.500Z" fill="none" stroke="#4a4a4a" stroke-width="1.15" stroke-linecap="round" stroke-linejoin="round"/><path d="M4.500,1.500L2.500,3.500L4.500,5.500M2.800,3.500H8C10.500,3.500 12,4.800 12.500,6.500" fill="none" stroke="#4a4a4a" stroke-width="1.15" stroke-linecap="round" stroke-linejoin="round"/></svg>
<span class="t" style="left:683.20px;top:133.10px;font-size:7.10px;letter-spacing:-0.051px">Rotate left</span>
<svg class="ic" viewBox="0 0 16 16" style="left:734.20px;top:128.10px;width:10.00px;height:10.00px"><path d="M2,13.500H13.500V9.500L10,6.500L5.500,11.500L2,9.500Z" fill="none" stroke="#4a4a4a" stroke-width="1.15" stroke-linecap="round" stroke-linejoin="round"/><path d="M11.500,1.500L13.500,3.500L11.500,5.500M13.200,3.500H8C5.500,3.500 4,4.800 3.500,6.500" fill="none" stroke="#4a4a4a" stroke-width="1.15" stroke-linecap="round" stroke-linejoin="round"/></svg>
<span class="t" style="left:748.40px;top:133.10px;font-size:7.10px;letter-spacing:-0.000px">Rotate right</span>
<svg class="ic" viewBox="0 0 16 16" style="left:805.75px;top:129.15px;width:8.50px;height:8.50px"><circle cx="2.800" cy="8" r="1.500" fill="#3c3c3c"/><circle cx="8" cy="8" r="1.500" fill="#3c3c3c"/><circle cx="13.200" cy="8" r="1.500" fill="#3c3c3c"/></svg>
<svg class="ic" viewBox="0 0 16 16" style="left:836.75px;top:128.35px;width:9.50px;height:9.50px"><rect x="1.500" y="2.500" width="13" height="11" rx="1.800" fill="none" stroke="#4a4a4a" stroke-width="1.15" stroke-linecap="round" stroke-linejoin="round"/><path d="M9.500,2.500V13.500" fill="none" stroke="#4a4a4a" stroke-width="1.15" stroke-linecap="round" stroke-linejoin="round"/><path d="M11.200,5.500H12.800M11.200,8H12.800" fill="none" stroke="#2a78c8" stroke-width="1" stroke-linecap="round"/></svg>
<span class="t" style="left:851.00px;top:133.10px;font-size:7.10px;letter-spacing:-0.158px">Details</span>
<div class="sel" style="left:239.600px;top:278.300px;width:88.400px;height:18.100px"></div>
<svg class="ic" viewBox="0 0 16 16" style="left:257.20px;top:154.10px;width:9.60px;height:9.60px"><path d="M3.300,7.800V14.200H6.600V10.400H9.400V14.200H12.700V7.800L8,3.600Z" fill="#f3d39a" stroke="#b8a078" stroke-width=".7"/><path d="M6.600,14.200V10.400H9.400V14.200Z" fill="#e79a3c"/><path d="M1.300,8.600L8,2.200L14.700,8.600" fill="none" stroke="#858a91" stroke-width="1.900" stroke-linecap="round" stroke-linejoin="round"/></svg>
<span class="t" style="left:269.70px;top:158.90px;font-size:7.10px;letter-spacing:-0.010px">Home</span>
<svg class="ic" viewBox="0 0 16 16" style="left:257.20px;top:172.40px;width:9.60px;height:9.60px"><rect x="3.500" y="1" width="11.500" height="10.500" rx="1.800" fill="#155fa8"/><rect x="1" y="3.500" width="11.500" height="11" rx="1.800" fill="#2e9be6"/><path d="M1.500,13.500L5.500,9L8.500,12L10,10.800L12.300,13.500Z" fill="#e8f4ff"/><circle cx="9" cy="6.800" r="1.200" fill="#e8f4ff"/></svg>
<span class="t" style="left:269.70px;top:177.20px;font-size:7.10px;letter-spacing:-0.313px">Gallery</span>
<svg class="ic" viewBox="0 0 16 16" style="left:256.80px;top:190.30px;width:10.40px;height:10.40px"><path d="M4.200,12.500A3.200,3.200 0 0 1 4,6.200A4.300,4.300 0 0 1 12,5.800A3.400,3.400 0 0 1 12.200,12.500Z" fill="#1b7fd8"/><path d="M4.200,12.500A3.200,3.200 0 0 1 3.300,6.400C6,6.800 8,9 9,12.500Z" fill="#0f5db4"/></svg>
<span class="t" style="left:269.70px;top:195.50px;font-size:7.10px;letter-spacing:-0.085px">Abhijith - Personal</span>
<svg class="ic" viewBox="0 0 16 16" style="left:244.50px;top:192.70px;width:5.60px;height:5.60px"><path d="M5.5,3L10.5,8L5.5,13" fill="none" stroke="#4c4c4c" stroke-width="1.500" stroke-linecap="round" stroke-linejoin="round"/></svg>
<svg class="ic" viewBox="0 0 16 16" style="left:256.80px;top:227.00px;width:10.40px;height:10.40px"><rect x=".8" y="2.500" width="14.400" height="10" rx="1.200" fill="#1d93d2"/><rect x=".8" y="2.500" width="7" height="10" fill="#2fb4c8"/><rect x=".8" y="11" width="14.400" height="1.800" fill="#16679c"/></svg>
<span class="t" style="left:269.70px;top:232.20px;font-size:7.10px;letter-spacing:-0.207px">Desktop</span>
<svg class="ic" viewBox="0 0 16 16" style="left:319.50px;top:229.10px;width:6.60px;height:6.60px"><path d="M9.2,1.2L14.8,6.800L12.600,7.600L10.400,10.800L11,13.200L8,10.200L5.200,7.200L2.800,5L5.200,5.600L8.400,3.400Z" fill="#7f848b"/><path d="M6.800,9.200L1.800,14.200" stroke="#7f848b" stroke-width="1.600" stroke-linecap="round"/></svg>
<svg class="ic" viewBox="0 0 16 16" style="left:257.20px;top:245.80px;width:9.60px;height:9.60px"><path d="M8,1.500V10M4.200,6.500L8,10.300L11.800,6.500" fill="none" stroke="#2b9a62" stroke-width="1.700" stroke-linecap="round" stroke-linejoin="round"/><path d="M2.500,13.800H13.500" stroke="#2b9a62" stroke-width="1.700" stroke-linecap="round"/></svg>
<span class="t" style="left:269.70px;top:250.60px;font-size:7.10px;letter-spacing:-0.147px">Downloads</span>
<svg class="ic" viewBox="0 0 16 16" style="left:319.50px;top:247.50px;width:6.60px;height:6.60px"><path d="M9.2,1.2L14.8,6.800L12.600,7.600L10.400,10.800L11,13.200L8,10.200L5.200,7.200L2.800,5L5.200,5.600L8.400,3.400Z" fill="#7f848b"/><path d="M6.800,9.200L1.800,14.200" stroke="#7f848b" stroke-width="1.600" stroke-linecap="round"/></svg>
<svg class="ic" viewBox="0 0 16 16" style="left:257.20px;top:264.30px;width:9.60px;height:9.60px"><rect x="2.500" y="1" width="11" height="14" rx="1.500" fill="#9aa4b0"/><rect x="3.800" y="2.300" width="8.400" height="11.400" rx=".6" fill="#eef1f5"/><path d="M5.200,5H10.800M5.200,7.500H10.800M5.200,10H9" stroke="#8892a0" stroke-width=".9"/></svg>
<span class="t" style="left:269.70px;top:269.10px;font-size:7.10px;letter-spacing:-0.134px">Documents</span>
<svg class="ic" viewBox="0 0 16 16" style="left:319.50px;top:266.00px;width:6.60px;height:6.60px"><path d="M9.2,1.2L14.8,6.800L12.600,7.600L10.400,10.800L11,13.200L8,10.200L5.200,7.200L2.800,5L5.200,5.600L8.400,3.400Z" fill="#7f848b"/><path d="M6.800,9.200L1.800,14.200" stroke="#7f848b" stroke-width="1.600" stroke-linecap="round"/></svg>
<svg class="ic" viewBox="0 0 16 16" style="left:257.20px;top:282.70px;width:9.60px;height:9.60px"><rect x="1" y="1.500" width="14" height="13" rx="2" fill="#1a8aa8"/><rect x="2.500" y="3" width="11" height="10" rx="1" fill="#2aa3d8"/><path d="M2.500,13L6.500,8L9,10.500L11,9L13.500,12V13Z" fill="#0d4f78"/><circle cx="10.800" cy="5.800" r="1.300" fill="#d9f3ff"/></svg>
<span class="t" style="left:269.70px;top:287.50px;font-size:7.10px;letter-spacing:-0.244px">Pictures</span>
<svg class="ic" viewBox="0 0 16 16" style="left:319.50px;top:284.40px;width:6.60px;height:6.60px"><path d="M9.2,1.2L14.8,6.800L12.600,7.600L10.400,10.800L11,13.200L8,10.200L5.200,7.200L2.800,5L5.200,5.600L8.400,3.400Z" fill="#7f848b"/><path d="M6.800,9.200L1.800,14.200" stroke="#7f848b" stroke-width="1.600" stroke-linecap="round"/></svg>
<svg class="ic" viewBox="0 0 16 16" style="left:257.20px;top:301.10px;width:9.60px;height:9.60px"><circle cx="8" cy="8" r="7" fill="#e4572e"/><circle cx="8" cy="8" r="7" fill="none" stroke="#c43a2a" stroke-width=".8"/><path d="M6.500,11V4.800L10.800,4V9.800" fill="none" stroke="#fff" stroke-width="1.200"/><circle cx="5.600" cy="11" r="1.400" fill="#fff"/><circle cx="9.900" cy="9.900" r="1.400" fill="#fff"/></svg>
<span class="t" style="left:269.70px;top:305.90px;font-size:7.10px;letter-spacing:-0.088px">Music</span>
<svg class="ic" viewBox="0 0 16 16" style="left:319.50px;top:302.80px;width:6.60px;height:6.60px"><path d="M9.2,1.2L14.8,6.800L12.600,7.600L10.400,10.800L11,13.200L8,10.200L5.200,7.200L2.800,5L5.200,5.600L8.400,3.400Z" fill="#7f848b"/><path d="M6.800,9.200L1.800,14.200" stroke="#7f848b" stroke-width="1.600" stroke-linecap="round"/></svg>
<svg class="ic" viewBox="0 0 16 16" style="left:257.20px;top:319.40px;width:9.60px;height:9.60px"><rect x="1.500" y="1.500" width="13" height="13" rx="2.200" fill="#8a3fd0"/><path d="M6.300,5V11L11.200,8Z" fill="#fff"/></svg>
<span class="t" style="left:269.70px;top:324.20px;font-size:7.10px;letter-spacing:-0.264px">Videos</span>
<svg class="ic" viewBox="0 0 16 16" style="left:319.50px;top:321.10px;width:6.60px;height:6.60px"><path d="M9.2,1.2L14.8,6.800L12.600,7.600L10.400,10.800L11,13.200L8,10.200L5.200,7.200L2.800,5L5.200,5.600L8.400,3.400Z" fill="#7f848b"/><path d="M6.800,9.200L1.800,14.200" stroke="#7f848b" stroke-width="1.600" stroke-linecap="round"/></svg>
<svg class="ic" viewBox="0 0 16 16" style="left:256.80px;top:355.90px;width:10.40px;height:10.40px"><rect x="3.500" y=".8" width="9" height="14.400" rx="1.800" fill="#1b6488"/><rect x="4.600" y="2.300" width="6.800" height="10.500" fill="#2682ae"/></svg>
<span class="t" style="left:269.70px;top:361.10px;font-size:7.10px;letter-spacing:-0.200px">Moto Edge 50 Neo</span>
<svg class="ic" viewBox="0 0 16 16" style="left:244.50px;top:358.30px;width:5.60px;height:5.60px"><path d="M5.5,3L10.5,8L5.5,13" fill="none" stroke="#4c4c4c" stroke-width="1.500" stroke-linecap="round" stroke-linejoin="round"/></svg>
<svg class="ic" viewBox="0 0 16 16" style="left:256.80px;top:374.30px;width:10.40px;height:10.40px"><rect x=".8" y="2" width="14.400" height="9.500" rx="1.200" fill="#2aa0b8"/><rect x="1.800" y="3" width="12.400" height="7.500" fill="#35bdc8"/><path d="M5.500,14H10.500M8,11.500V14" stroke="#2aa0b8" stroke-width="1.400" stroke-linecap="round"/></svg>
<span class="t" style="left:269.70px;top:379.50px;font-size:7.10px;letter-spacing:-0.407px">This PC</span>
<svg class="ic" viewBox="0 0 16 16" style="left:244.50px;top:376.70px;width:5.60px;height:5.60px"><path d="M5.5,3L10.5,8L5.5,13" fill="none" stroke="#4c4c4c" stroke-width="1.500" stroke-linecap="round" stroke-linejoin="round"/></svg>
<svg class="ic" viewBox="0 0 16 16" style="left:256.80px;top:392.70px;width:10.40px;height:10.40px"><rect x="1" y="6.500" width="14" height="6" rx="1" fill="#7d98a0"/><path d="M4,6.500L6,3L8.500,5.500L10.500,3.500L12,6.500Z" fill="#3f9a78"/><rect x="2.500" y="10.300" width="4" height="1" fill="#dfe8ea"/></svg>
<span class="t" style="left:269.70px;top:397.90px;font-size:6.80px;letter-spacing:-0.220px">DVD Drive (D:) CCC</span>
<svg class="ic" viewBox="0 0 16 16" style="left:244.50px;top:395.10px;width:5.60px;height:5.60px"><path d="M5.5,3L10.5,8L5.5,13" fill="none" stroke="#4c4c4c" stroke-width="1.500" stroke-linecap="round" stroke-linejoin="round"/></svg>
<svg class="ic" viewBox="0 0 16 16" style="left:256.80px;top:411.00px;width:10.40px;height:10.40px"><rect x="1" y="2" width="9" height="6.500" rx="1" fill="#2a8ed0"/><rect x="6" y="6.500" width="9" height="6.500" rx="1" fill="#35b0c8"/><circle cx="5" cy="11" r="3" fill="#1f70b8"/></svg>
<span class="t" style="left:269.70px;top:416.20px;font-size:7.10px;letter-spacing:-0.049px">Network</span>
<svg class="ic" viewBox="0 0 16 16" style="left:244.50px;top:413.40px;width:5.60px;height:5.60px"><path d="M5.5,3L10.5,8L5.5,13" fill="none" stroke="#4c4c4c" stroke-width="1.500" stroke-linecap="round" stroke-linejoin="round"/></svg>
<div class="sep" style="left:244px;top:213.500px"></div>
<div class="sep" style="left:244px;top:342.300px"></div>
<div class="abs" style="left:338.800px;top:150px;width:155.400px;height:158px;background:#d9d9d9;box-shadow:inset 0 0 0 .6px #c4c4c4"></div>
<svg class="abs" style="left:367.300px;top:152.900px;width:94.300px;height:141px" viewBox="0 0 94.600 141.400" preserveAspectRatio="none">
<defs>
<linearGradient id="sky" x1="0" x2="0" y1="0" y2="1"><stop offset="0" stop-color="#c9d7df"/><stop offset=".4" stop-color="#bccbd3"/></linearGradient>
<linearGradient id="sea" x1="0" x2="0" y1="0" y2="1"><stop offset="0" stop-color="#a3bac7"/><stop offset="1" stop-color="#bccbd3"/></linearGradient>
<linearGradient id="mt" x1="0" x2="1" y1="0" y2="1"><stop offset="0" stop-color="#7b95a4"/><stop offset=".55" stop-color="#9cb1bc"/><stop offset="1" stop-color="#a5b8c1"/></linearGradient>
<linearGradient id="sand" x1="0" x2="1" y1="0" y2="0"><stop offset="0" stop-color="#bfae9b"/><stop offset="1" stop-color="#c9b7a2"/></linearGradient>
<filter id="pb" x="-10%" y="-10%" width="120%" height="120%"><feGaussianBlur stdDeviation="1.3"/></filter>
<filter id="pb2" x="-10%" y="-10%" width="120%" height="120%"><feGaussianBlur stdDeviation=".7"/></filter>
<clipPath id="pc"><rect width="94.600" height="141.400"/></clipPath>
</defs>
<g clip-path="url(#pc)">
<rect width="94.600" height="141.400" fill="url(#sky)"/>
<g filter="url(#pb)">
<path d="M50,34L60,38L68,37L80,42L95,40V82H50Z" fill="#a2b6c0"/>
<path d="M-2,14L4,19L9.300,21.400L14,19.500L19,19L25,23L31.200,25L37,28L43.400,30L48,33L53,36L57,40L61,45L70,48L82,50L96,49V84H-2Z" fill="url(#mt)"/>
<path d="M36,32L50,36L58,44L61,56L60,66L46,64L38,50Z" fill="#adbfc8" opacity=".7"/>
<path d="M-2,37L4,41L9.300,44.600L14,48L19,53L25,58L31.200,61.600L37,64.500L43.400,66.500L55,67.700L70,66L96,66V84H-2Z" fill="#62808f"/>
<path d="M52,68L62,60L70,56L80,58L96,55V84H52Z" fill="#738c98"/>
<rect x="-2" y="78" width="98" height="66" fill="url(#sea)"/>
<path d="M20,80.500C30,82 38,84.500 43.400,87.200C49,90.500 53,94.500 55.500,99C57.500,103.500 56,108 53,111.500C49,116 45,119 41,121.300C35,125 29,128.500 23.900,131C18,134 13,136.500 7,139.500L2,143H96V80Z" fill="url(#sand)"/>
<path d="M40,84C52,88 60,95 62,104C60,112 52,120 42,126C52,118 57,110 56.500,102C55,94 48,88 40,84Z" fill="#a89a8a" opacity=".6"/>
</g>
<g filter="url(#pb2)">
<path d="M-1,77.500L30,78.500L60,80L95,83.500V89L60,86L30,82.500L-1,79.500Z" fill="#5d6f6c"/><path d="M40,81L60,82L95,85V92L70,87Z" fill="#46564c"/>
<path d="M0,77.600L28,78.600L58,80.600L95,83.600" stroke="#e9eef0" stroke-width="2.400" stroke-dasharray="2.600 1.100 1.400 1.800 3.200 .9 1.200 1.500" fill="none" opacity=".88"/>
<path d="M72,84L95,85V99C88,95 80,90 72,84Z" fill="#4a5a50"/>
<path d="M89,108L95,106V122L90,118Z" fill="#46534a"/>
<path d="M48,119L95,115M38,131L95,127M56,112L95,109.500" stroke="#6e6154" stroke-width="1.700" stroke-dasharray="2.400 1.400" opacity=".75" fill="none"/>
<path d="M48,120.600L95,116.600M38,132.600L95,128.600" stroke="#e4ddd2" stroke-width=".9" stroke-dasharray="2.400 1.400" opacity=".7" fill="none"/>
<path d="M10,138L30,128M20,140L40,134" stroke="#7b6f63" stroke-width=".9" stroke-dasharray="1 2" opacity=".7" fill="none"/>
</g>
</g>
</svg>

<div class="abs" style="left:461.300px;top:153px;width:.9px;height:141px;background:#8e9498"></div>
<span class="t" style="left:385.80px;top:302.80px;font-size:7.10px;letter-spacing:0.043px">city with mountains</span>
<span class="t" style="left:245.20px;top:503.80px;font-size:6.80px;letter-spacing:0.247px;color:#505050;text-shadow:none">1 item</span>
<span class="t" style="left:277.50px;top:503.80px;font-size:6.80px;letter-spacing:-0.049px;color:#505050;text-shadow:none">1 item selected</span>
<span class="t" style="left:326.00px;top:503.80px;font-size:6.80px;letter-spacing:-0.189px;color:#505050;text-shadow:none">1.53 MB</span>
<svg class="ic" viewBox="0 0 16 16" style="left:858.25px;top:500.05px;width:7.50px;height:7.50px"><path d="M2,4H14M2,8H14M2,12H14" fill="none" stroke="#4a4a4a" stroke-width="1.500" stroke-linecap="round"/></svg>
<svg class="ic" viewBox="0 0 16 16" style="left:872.25px;top:500.05px;width:7.50px;height:7.50px"><rect x="2.200" y="1.800" width="11.600" height="11" rx="1.800" fill="none" stroke="#444" stroke-width="1.700"/><path d="M2.200,14.600H13.800" stroke="#444" stroke-width="1.500"/></svg>
</div></div>
<div id="menu">
<div class="pg" style="position:absolute;left:-458px;top:-169px;width:1080px;height:607px">
<svg class="ic" viewBox="0 0 16 16" style="left:471.40px;top:175.90px;width:11.00px;height:11.00px"><path d="M4.200,1.500L10.200,10.200M11.800,1.500L5.800,10.200" fill="none" stroke="#4a4a4a" stroke-width="1.150" stroke-linecap="round"/><circle cx="4.600" cy="12.200" r="2.100" fill="none" stroke="#4a5f78" stroke-width="1.150"/><circle cx="11.400" cy="12.200" r="2.100" fill="none" stroke="#4a5f78" stroke-width="1.150"/></svg>
<span class="t" style="left:472.00px;top:195.00px;font-size:6.90px;letter-spacing:-0.313px">Cut</span>
<svg class="ic" viewBox="0 0 16 16" style="left:508.80px;top:175.90px;width:11.00px;height:11.00px"><rect x="5.5" y="1.8" width="8.2" height="9.8" rx="2" fill="none" stroke="#4a4a4a" stroke-width="1.15" stroke-linecap="round" stroke-linejoin="round"/><path d="M4,4.6C2.9,4.8 2.3,5.5 2.3,6.6V12A2.2,2.2 0 0 0 4.5,14.2H9C10,14.2 10.6,13.7 10.9,12.9" fill="none" stroke="#4a4a4a" stroke-width="1.15" stroke-linecap="round" stroke-linejoin="round"/></svg>
<span class="t" style="left:506.45px;top:195.00px;font-size:6.90px;letter-spacing:-0.102px">Copy</span>
<svg class="ic" viewBox="0 0 16 16" style="left:546.55px;top:176.15px;width:10.50px;height:10.50px"><rect x="1.500" y="3.500" width="13" height="9" rx="2" fill="none" stroke="#4a4a4a" stroke-width="1.15" stroke-linecap="round" stroke-linejoin="round"/><path d="M10,1.200V14.800M8.300,1.200H11.700M8.300,14.800H11.700" fill="none" stroke="#2a78c8" stroke-width="1.1" stroke-linecap="round"/><path d="M4,10.500L5.800,5.800L7.600,10.500M4.600,9H7" fill="none" stroke="#4a4a4a" stroke-width=".9" stroke-linecap="round" stroke-linejoin="round"/></svg>
<span class="t" style="left:539.50px;top:195.00px;font-size:6.90px;letter-spacing:-0.247px">Rename</span>
<svg class="ic" viewBox="0 0 16 16" style="left:583.80px;top:175.90px;width:11.00px;height:11.00px"><path d="M8.500,3H4.500A2,2 0 0 0 2.500,5V11.500A2,2 0 0 0 4.500,13.500H11A2,2 0 0 0 13,11.500V10" fill="none" stroke="#4a4a4a" stroke-width="1.15" stroke-linecap="round" stroke-linejoin="round"/><path d="M10.500,1.800L14,5L10.500,8.200M14,5H10.500C8,5 6.500,6.700 6.500,9.500" fill="none" stroke="#4a4a4a" stroke-width="1.15" stroke-linecap="round" stroke-linejoin="round"/></svg>
<span class="t" style="left:580.85px;top:195.00px;font-size:6.90px;letter-spacing:-0.303px">Share</span>
<svg class="ic" viewBox="0 0 16 16" style="left:621.00px;top:175.90px;width:11.00px;height:11.00px"><path d="M2.500,4H13.500M6,4V2.800A1,1 0 0 1 7,1.800H9A1,1 0 0 1 10,2.800V4M3.800,4L4.600,13A1.500,1.500 0 0 0 6.100,14.300H9.900A1.500,1.500 0 0 0 11.400,13L12.200,4M6.800,7V11.300M9.200,7V11.300" fill="none" stroke="#4a4a4a" stroke-width="1.15" stroke-linecap="round" stroke-linejoin="round"/></svg>
<span class="t" style="left:616.70px;top:195.00px;font-size:6.90px;letter-spacing:-0.058px">Delete</span>
<div class="msep" style="left:458px;top:204.700px;width:188.500px"></div>
<svg class="ic" viewBox="0 0 16 16" style="left:465.55px;top:210.25px;width:10.50px;height:10.50px"><rect x="1" y="1" width="14" height="14" rx="2.200" fill="#2a6fd6"/><path d="M1,12L6,6.500L9.500,10L11.500,8.500L15,12V13A2,2 0 0 1 13,15H3A2,2 0 0 1 1,13Z" fill="#153f98"/><path d="M8,1H13A2,2 0 0 1 15,3V8Z" fill="#8ec5f5"/></svg>
<span class="t" style="left:482.00px;top:215.50px;font-size:8.10px;letter-spacing:-0.129px">Open</span>
<span class="t g" style="left:599.80px;top:215.50px;font-size:6.60px;letter-spacing:-0.015px">Enter</span>
<svg class="ic" viewBox="0 0 16 16" style="left:465.55px;top:228.45px;width:10.50px;height:10.50px"><path d="M2,2.500V12.500A1.500,1.500 0 0 0 3.500,14H6M2,2.500H8M4.500,5.500H13.500" fill="none" stroke="#4a4a4a" stroke-width="1.15" stroke-linecap="round" stroke-linejoin="round"/><circle cx="10.500" cy="11" r="3.300" fill="#2a6fc8"/><circle cx="10.500" cy="11" r="1.200" fill="#fff"/></svg>
<span class="t" style="left:482.00px;top:233.70px;font-size:8.10px;letter-spacing:0.037px">Open with</span>
<svg class="ic" viewBox="0 0 16 16" style="left:632.65px;top:230.95px;width:5.50px;height:5.50px"><path d="M5.5,3L10.5,8L5.5,13" fill="none" stroke="#4c4c4c" stroke-width="1.500" stroke-linecap="round" stroke-linejoin="round"/></svg>
<svg class="ic" viewBox="0 0 16 16" style="left:465.55px;top:246.95px;width:10.50px;height:10.50px"><path d="M9.500,1.500L11,5.500L15,7L11,8.500L9.500,12.500L8,8.500L4,7L8,5.500Z" fill="#2a62c8"/><path d="M4,9.500L4.900,11.600L7,12.500L4.900,13.400L4,15.500L3.100,13.400L1,12.500L3.100,11.600Z" fill="#4a88e0"/><circle cx="3.500" cy="4" r="1.200" fill="#4a88e0"/></svg>
<span class="t" style="left:482.00px;top:252.20px;font-size:8.10px;letter-spacing:-0.087px">AI actions</span>
<svg class="ic" viewBox="0 0 16 16" style="left:632.65px;top:249.45px;width:5.50px;height:5.50px"><path d="M5.5,3L10.5,8L5.5,13" fill="none" stroke="#4c4c4c" stroke-width="1.500" stroke-linecap="round" stroke-linejoin="round"/></svg>
<svg class="ic" viewBox="0 0 16 16" style="left:465.55px;top:265.35px;width:10.50px;height:10.50px"><rect x="4.200" y="1.500" width="7.600" height="13" rx="1.800" fill="none" stroke="#4a4a4a" stroke-width="1.15" stroke-linecap="round" stroke-linejoin="round"/></svg>
<span class="t" style="left:482.00px;top:270.60px;font-size:8.10px;letter-spacing:-0.047px">Send to My Phone</span>
<svg class="ic" viewBox="0 0 16 16" style="left:465.55px;top:283.75px;width:10.50px;height:10.50px"><rect x="1.800" y="2.500" width="12.400" height="11" rx="2.200" fill="none" stroke="#4a4a4a" stroke-width="1.15" stroke-linecap="round" stroke-linejoin="round"/><path d="M9,5L11.500,7.300L9,9.600M11.500,7.300H8.500C6.500,7.300 5.500,8.500 5.200,10.500" fill="none" stroke="#4a4a4a" stroke-width="1.15" stroke-linecap="round" stroke-linejoin="round"/></svg>
<span class="t" style="left:482.00px;top:289.00px;font-size:8.10px;letter-spacing:-0.147px">Share with</span>
<svg class="ic" viewBox="0 0 16 16" style="left:632.65px;top:286.25px;width:5.50px;height:5.50px"><path d="M5.5,3L10.5,8L5.5,13" fill="none" stroke="#4c4c4c" stroke-width="1.500" stroke-linecap="round" stroke-linejoin="round"/></svg>
<svg class="ic" viewBox="0 0 16 16" style="left:465.55px;top:301.95px;width:10.50px;height:10.50px"><rect x="2.500" y="3.500" width="12" height="9" rx="1.500" fill="#fff" stroke="#4a4a4a" stroke-width="1.100"/><rect x="1" y="1.500" width="7.500" height="6.500" rx="1" fill="#2d7fd6"/><path d="M2,13.800H11" fill="none" stroke="#4a4a4a" stroke-width="1.15" stroke-linecap="round" stroke-linejoin="round"/><path d="M6,11L9,8.500L12,11" fill="none" stroke="#4a4a4a" stroke-width="1.15" stroke-linecap="round" stroke-linejoin="round"/></svg>
<span class="t" style="left:482.00px;top:307.20px;font-size:8.10px;letter-spacing:-0.047px">Set as desktop background</span>
<svg class="ic" viewBox="0 0 16 16" style="left:465.55px;top:320.25px;width:10.50px;height:10.50px"><path d="M2,13.500H13.500V9.500L10,6.500L5.500,11.500L2,9.500Z" fill="none" stroke="#4a4a4a" stroke-width="1.15" stroke-linecap="round" stroke-linejoin="round"/><path d="M11.500,1.500L13.500,3.500L11.500,5.500M13.200,3.500H8C5.500,3.500 4,4.800 3.500,6.500" fill="none" stroke="#4a4a4a" stroke-width="1.15" stroke-linecap="round" stroke-linejoin="round"/></svg>
<span class="t" style="left:482.00px;top:325.50px;font-size:8.10px;letter-spacing:-0.031px">Rotate right</span>
<svg class="ic" viewBox="0 0 16 16" style="left:465.55px;top:338.75px;width:10.50px;height:10.50px"><path d="M2,13.500H13.500V9.500L10,6.500L5.500,11.500L2,9.500Z" fill="none" stroke="#4a4a4a" stroke-width="1.15" stroke-linecap="round" stroke-linejoin="round"/><path d="M4.500,1.500L2.500,3.500L4.500,5.500M2.800,3.500H8C10.500,3.500 12,4.800 12.500,6.500" fill="none" stroke="#4a4a4a" stroke-width="1.15" stroke-linecap="round" stroke-linejoin="round"/></svg>
<span class="t" style="left:482.00px;top:344.00px;font-size:8.10px;letter-spacing:-0.011px">Rotate left</span>
<svg class="ic" viewBox="0 0 16 16" style="left:465.55px;top:357.25px;width:10.50px;height:10.50px"><path d="M8,1.800L9.900,5.900L14.300,6.400L11,9.400L11.900,13.800L8,11.600L4.100,13.800L5,9.400L1.700,6.400L6.100,5.900Z" fill="none" stroke="#4a4a4a" stroke-width="1.15" stroke-linecap="round" stroke-linejoin="round"/></svg>
<span class="t" style="left:482.00px;top:362.50px;font-size:8.10px;letter-spacing:-0.074px">Add to Favorites</span>
<svg class="ic" viewBox="0 0 16 16" style="left:465.55px;top:375.75px;width:10.50px;height:10.50px"><path d="M1.800,4.500A1.500,1.500 0 0 1 3.300,3H6L7.500,4.500H12.700A1.500,1.500 0 0 1 14.200,6V12A1.500,1.500 0 0 1 12.700,13.500H3.300A1.500,1.500 0 0 1 1.800,12Z" fill="none" stroke="#4a4a4a" stroke-width="1.15" stroke-linecap="round" stroke-linejoin="round"/><path d="M10.500,4.500V13.500" fill="none" stroke="#4a4a4a" stroke-width="1.15" stroke-linecap="round" stroke-linejoin="round"/></svg>
<span class="t" style="left:482.00px;top:381.00px;font-size:8.10px;letter-spacing:-0.162px">Compress to...</span>
<svg class="ic" viewBox="0 0 16 16" style="left:632.65px;top:378.25px;width:5.50px;height:5.50px"><path d="M5.5,3L10.5,8L5.5,13" fill="none" stroke="#4c4c4c" stroke-width="1.500" stroke-linecap="round" stroke-linejoin="round"/></svg>
<svg class="ic" viewBox="0 0 16 16" style="left:465.55px;top:394.35px;width:10.50px;height:10.50px"><rect x="1.500" y="3" width="13" height="10" rx="1.800" fill="none" stroke="#4a4a4a" stroke-width="1.15" stroke-linecap="round" stroke-linejoin="round"/><path d="M4,6H7.500M4,8.500H6" fill="none" stroke="#4a4a4a" stroke-width="1.15" stroke-linecap="round" stroke-linejoin="round"/></svg>
<span class="t" style="left:482.00px;top:399.60px;font-size:8.10px;letter-spacing:-0.094px">Copy as path</span>
<span class="t g" style="left:599.80px;top:399.60px;font-size:6.60px;letter-spacing:0.221px">Ctrl+Shift+C</span>
<svg class="ic" viewBox="0 0 16 16" style="left:465.55px;top:412.85px;width:10.50px;height:10.50px"><path d="M10.800,1.800A3.800,3.800 0 0 0 7.200,6.800L2,12A1.400,1.400 0 0 0 4,14L9.200,8.800A3.800,3.800 0 0 0 14.200,5.200L11.800,7.300L9.600,6.400L8.700,4.200Z" fill="none" stroke="#4a4a4a" stroke-width="1.15" stroke-linecap="round" stroke-linejoin="round"/></svg>
<span class="t" style="left:482.00px;top:418.10px;font-size:8.10px;letter-spacing:-0.072px">Properties</span>
<span class="t g" style="left:599.80px;top:418.10px;font-size:6.60px;letter-spacing:0.196px">Alt+Enter</span>
<svg class="ic" viewBox="0 0 16 16" style="left:465.55px;top:436.25px;width:10.50px;height:10.50px"><path d="M4.200,12.500A3.200,3.200 0 0 1 4,6.200A4.300,4.300 0 0 1 12,5.800A3.400,3.400 0 0 1 12.200,12.500Z" fill="#1b7fd8"/><path d="M4.200,12.500A3.200,3.200 0 0 1 3.300,6.400C6,6.800 8,9 9,12.500Z" fill="#0f5db4"/></svg>
<span class="t" style="left:482.00px;top:441.50px;font-size:8.10px;letter-spacing:-0.127px">OneDrive</span>
<svg class="ic" viewBox="0 0 16 16" style="left:632.65px;top:438.75px;width:5.50px;height:5.50px"><path d="M5.5,3L10.5,8L5.5,13" fill="none" stroke="#4c4c4c" stroke-width="1.500" stroke-linecap="round" stroke-linejoin="round"/></svg>
<svg class="ic" viewBox="0 0 16 16" style="left:465.55px;top:454.75px;width:10.50px;height:10.50px"><rect x="1" y="1" width="14" height="14" rx="2.200" fill="#2a6fd6"/><path d="M1,12L6,6.500L9.500,10L11.500,8.500L15,12V13A2,2 0 0 1 13,15H3A2,2 0 0 1 1,13Z" fill="#153f98"/><path d="M8,1H13A2,2 0 0 1 15,3V8Z" fill="#8ec5f5"/></svg>
<span class="t" style="left:482.00px;top:460.00px;font-size:8.10px;letter-spacing:-0.153px">Photos</span>
<svg class="ic" viewBox="0 0 16 16" style="left:632.65px;top:457.25px;width:5.50px;height:5.50px"><path d="M5.5,3L10.5,8L5.5,13" fill="none" stroke="#4c4c4c" stroke-width="1.500" stroke-linecap="round" stroke-linejoin="round"/></svg>
<svg class="ic" viewBox="0 0 16 16" style="left:465.55px;top:478.45px;width:10.50px;height:10.50px"><path d="M6.500,2.500H4A1.500,1.500 0 0 0 2.500,4V12A1.500,1.500 0 0 0 4,13.500H12A1.500,1.500 0 0 0 13.500,12V9.500" fill="none" stroke="#4a4a4a" stroke-width="1.15" stroke-linecap="round" stroke-linejoin="round"/><path d="M9.500,2.500H13.500V6.500M13.500,2.500L8.500,7.500" fill="none" stroke="#4a4a4a" stroke-width="1.15" stroke-linecap="round" stroke-linejoin="round"/></svg>
<span class="t" style="left:482.00px;top:483.70px;font-size:8.10px;letter-spacing:0.004px">Show more options</span>
<div class="msep" style="left:458px;top:429.800px;width:188.500px"></div>
<div class="msep" style="left:458px;top:471.800px;width:188.500px"></div>
</div></div>
<div id="task">
<div class="pg" style="position:absolute;left:0;top:-581px;width:1080px;height:607px">
<svg class="ic" viewBox="0 0 32 32" style="left:10.500px;top:586px;width:15.500px;height:15.500px"><defs><radialGradient id="sun" cx=".5" cy=".5" r=".6"><stop offset="0" stop-color="#ffe680"/><stop offset="1" stop-color="#f2a51e"/></radialGradient></defs><circle cx="19" cy="18" r="10" fill="url(#sun)"/><path d="M7,20A5.500,5.500 0 0 1 7.500,9A7.500,7.500 0 0 1 21.500,8.500A6,6 0 0 1 22,20Z" fill="#eef3fa" stroke="#b9c6da" stroke-width=".9"/><path d="M7,20A5.500,5.500 0 0 1 7.500,9C11,11 13,15 14,20Z" fill="#cfdcec"/><path d="M6,27C12,29 22,28 27,22" fill="none" stroke="#f08a5a" stroke-width="1.600" opacity=".7"/></svg>
<span class="t" style="left:29.30px;top:589.70px;font-size:7.00px;letter-spacing:-0.410px">27°C</span>
<span class="t g" style="left:29.30px;top:598.80px;font-size:7.00px;letter-spacing:-0.029px;color:#5f6266">Partly cloudy</span>
<svg class="ic" viewBox="0 0 20 20" style="left:405.800px;top:588px;width:13.600px;height:13.800px"><defs><linearGradient id="wl" x1="0" y1="0" x2="1" y2="1"><stop offset="0" stop-color="#58c6f4"/><stop offset="1" stop-color="#1270cc"/></linearGradient></defs><path d="M0,0H9.500V9.500H0ZM10.500,0H20V9.500H10.500ZM0,10.500H9.500V20H0ZM10.500,10.500H20V20H10.500Z" fill="url(#wl)"/></svg>
<div class="abs" style="left:430.400px;top:585.100px;width:119.200px;height:19.600px;border-radius:9.800px;background:#eef2fa;box-shadow:0 0 0 .5px rgba(120,140,180,.18)"></div>
<span class="t g" style="left:437.80px;top:595.20px;font-size:7.80px;letter-spacing:-0.095px;color:#66686e">Ask Copilot anything</span>
<svg class="ic" viewBox="0 0 20 12" style="left:518px;top:592.500px;width:10px;height:6px"><circle cx="5" cy="7" r="3.600" fill="none" stroke="#333" stroke-width="1.500"/><circle cx="15" cy="7" r="3.600" fill="none" stroke="#333" stroke-width="1.500"/><path d="M3,3.500C5,.5 8,1.500 10,4.500C12,1.500 15,.5 17,3.500" fill="none" stroke="#333" stroke-width="1.400"/></svg>
<svg class="ic" viewBox="0 0 12 16" style="left:535.600px;top:590.600px;width:7.400px;height:10px"><rect x="3.200" y="1" width="5.600" height="9" rx="2.800" fill="none" stroke="#444" stroke-width="1.300"/><path d="M1.200,8C1.200,14 10.800,14 10.800,8M6,12.500V15" fill="none" stroke="#444" stroke-width="1.300" stroke-linecap="round"/></svg>
<div class="abs" style="left:560.400px;top:591.400px;width:10.300px;height:10px;border-radius:1.500px;background:linear-gradient(135deg,#3a3c42,#15161a)"></div>
<div class="abs" style="left:564.600px;top:588.600px;width:9.800px;height:9.600px;border-radius:1.500px;background:linear-gradient(135deg,#f4f5f8,#c9ccd4);box-shadow:0 0 0 .4px #b8bcc6"></div>
<svg class="ic" viewBox="0 0 28 28" style="left:585.800px;top:587.300px;width:14px;height:14px"><defs><linearGradient id="cp1" x1=".3" y1="0" x2=".1" y2="1"><stop offset="0" stop-color="#2a86e6"/><stop offset=".45" stop-color="#36c0a4"/><stop offset="1" stop-color="#f6c22e"/></linearGradient><linearGradient id="cp2" x1=".7" y1="0" x2=".3" y2="1"><stop offset="0" stop-color="#a25ce6"/><stop offset=".5" stop-color="#ee5aa0"/><stop offset="1" stop-color="#f68a3a"/></linearGradient></defs><path d="M10,3H17C19,3 20,4.500 19.500,6.500L16.500,18.500C16,20.500 14.500,22 12.500,22H5C2.500,22 1.500,20 2.200,17.500L5.500,7C6.200,4.500 7.800,3 10,3Z" fill="url(#cp1)"/><path d="M15.500,7H23C25.500,7 26.500,9 25.800,11.500L22.500,21.500C21.800,24 20.200,25.500 18,25.500H11C9,25.500 8,24 8.500,22L11.500,10.500C12,8.500 13.500,7 15.500,7Z" fill="url(#cp2)"/><ellipse cx="14" cy="14.500" rx="3" ry="4.200" fill="#f4f0fa" transform="rotate(18 14 14.500)"/></svg>
<svg class="ic" viewBox="0 0 28 28" style="left:611px;top:586.800px;width:14px;height:14px"><path d="M10,3H17C19,3 20,4.500 19.500,6.500L16.500,18.500C16,20.500 14.500,22 12.500,22H5C2.500,22 1.500,20 2.200,17.500L5.500,7C6.200,4.500 7.800,3 10,3Z" fill="url(#cp1)"/><path d="M15.500,7H23C25.500,7 26.500,9 25.800,11.500L22.500,21.500C21.800,24 20.200,25.500 18,25.500H11C9,25.500 8,24 8.500,22L11.500,10.500C12,8.500 13.500,7 15.500,7Z" fill="url(#cp2)"/><ellipse cx="14" cy="14.500" rx="3" ry="4.200" fill="#f4f0fa" transform="rotate(18 14 14.500)"/></svg>
<div class="abs" style="left:613.400px;top:598px;width:11.400px;height:4.300px;border-radius:.8px;background:#1d1d22"></div>
<span class="abs" style="left:613.400px;top:598.300px;width:11.400px;height:4px;line-height:4px;font-size:3.400px;font-weight:bold;color:#fff;text-align:center;letter-spacing:.2px">M365</span>
<div class="abs" style="left:633px;top:584px;width:20.700px;height:20.300px;border-radius:2.500px;background:rgba(255,255,255,.5);box-shadow:0 0 0 .5px rgba(255,255,255,.5)"></div>
<svg class="ic" viewBox="0 0 26 24" style="left:636.600px;top:588.600px;width:13.200px;height:12.400px"><path d="M1,3A2,2 0 0 1 3,1H9L12,4H23A2,2 0 0 1 25,6V20A2,2 0 0 1 23,22H3A2,2 0 0 1 1,20Z" fill="#e9a82a"/><path d="M1,7H25V21A2,2 0 0 1 23,23H3A2,2 0 0 1 1,21Z" fill="#fbd24e"/><path d="M6,15H20V23H6Z" fill="#2a7fd0"/><path d="M8.500,17.500H17.500V23H8.500Z" fill="#fbd24e"/></svg>
<div class="abs" style="left:638.600px;top:604.300px;width:9.200px;height:1.500px;border-radius:.8px;background:#4b7fb8"></div>
<svg class="ic" viewBox="0 0 28 28" style="left:661.700px;top:588.200px;width:13.600px;height:13.600px"><defs><linearGradient id="ed1" x1="0" y1="0" x2="1" y2="1"><stop offset="0" stop-color="#35c1a0"/><stop offset=".5" stop-color="#1f9ad8"/><stop offset="1" stop-color="#1258b8"/></linearGradient></defs><circle cx="14" cy="14" r="13" fill="url(#ed1)"/><path d="M3,17C3,9 9,5.500 15,5.500C22,5.500 26,10 26,14C26,17.500 23,19.500 20.500,19.500C18,19.500 17,18 17.500,16.500C18,15 17,12.500 14,12.500C10.500,12.500 8.500,15.500 8.500,18.500C8.500,22 11,26 16,26.800C8,27.500 3,23 3,17Z" fill="#0f4fa4" opacity=".75"/><path d="M14,12.500C17,12.500 18,15 17.500,16.500C17,18 18,19.500 20.500,19.500C23,19.500 26,17.500 26,14C27.500,20 23,27 16,26.800C11,26 8.500,22 8.500,18.500C8.500,15.500 10.500,12.500 14,12.500Z" fill="#49d0c0" opacity=".9"/><circle cx="19" cy="13" r="4" fill="#d9f2fb" opacity=".9"/></svg>
<svg class="ic" viewBox="0 0 26 26" style="left:687.400px;top:589.200px;width:12.600px;height:12.600px"><path d="M8,6V4.500A3,3 0 0 1 11,1.500H15A3,3 0 0 1 18,4.500V6" fill="none" stroke="#1b6f98" stroke-width="2"/><rect x="1" y="5.500" width="24" height="19.500" rx="3" fill="#145a86"/><rect x="1" y="5.500" width="24" height="5" rx="2.500" fill="#1f86b4"/><rect x="8.500" y="10.500" width="4" height="4" fill="#f25022"/><rect x="13.500" y="10.500" width="4" height="4" fill="#7fba00"/><rect x="8.500" y="15.500" width="4" height="4" fill="#00a4ef"/><rect x="13.500" y="15.500" width="4" height="4" fill="#ffb900"/></svg>
<svg class="ic" viewBox="0 0 16 16" style="left:994.300px;top:591.400px;width:7.400px;height:7.400px"><path d="M2.500,10.500L8,5L13.500,10.500" fill="none" stroke="#2c2c2c" stroke-width="2" stroke-linecap="round" stroke-linejoin="round"/></svg>
<svg class="ic" viewBox="0 0 20 16" style="left:1010px;top:590.200px;width:11px;height:9px"><path d="M5,13.500A3.700,3.700 0 0 1 4.800,6.200A5.200,5.200 0 0 1 14.800,5.800A4,4 0 0 1 15.200,13.500Z" fill="#8d9096" stroke="#55585e" stroke-width="1.100"/><path d="M2.500,1.500L17.500,14.500" stroke="#3a3c40" stroke-width="1.600" stroke-linecap="round"/></svg>
<svg class="ic" viewBox="0 0 18 18" style="left:1029.200px;top:589.600px;width:10px;height:10px"><rect x="1.500" y="2" width="13" height="11" rx="1" fill="none" stroke="#333" stroke-width="1.500"/><path d="M4.500,16.500H11.500M8,13V16.500" stroke="#333" stroke-width="1.500" stroke-linecap="round"/><circle cx="14.500" cy="4" r="2.600" fill="#e4ebf6" stroke="#333" stroke-width="1.200"/><path d="M14.500,6.500V11" stroke="#333" stroke-width="1.200"/></svg>
<svg class="ic" viewBox="0 0 18 16" style="left:1043.400px;top:590.400px;width:9.800px;height:8.800px"><path d="M1.500,5.500H4.500L8.500,2V14L4.500,10.500H1.500Z" fill="none" stroke="#333" stroke-width="1.300" stroke-linejoin="round"/><path d="M11,5.500C12.200,7 12.200,9 11,10.500M13.500,3.500C15.800,6 15.800,10 13.500,12.500" fill="none" stroke="#333" stroke-width="1.200" stroke-linecap="round"/></svg>
<span class="t" style="left:1065.00px;top:589.60px;font-size:7.00px;color:#222">10:21</span>
<span class="t" style="left:1062.50px;top:599.10px;font-size:7.00px;color:#222">11/7/2025</span>
</div></div>
</body>
</html>
